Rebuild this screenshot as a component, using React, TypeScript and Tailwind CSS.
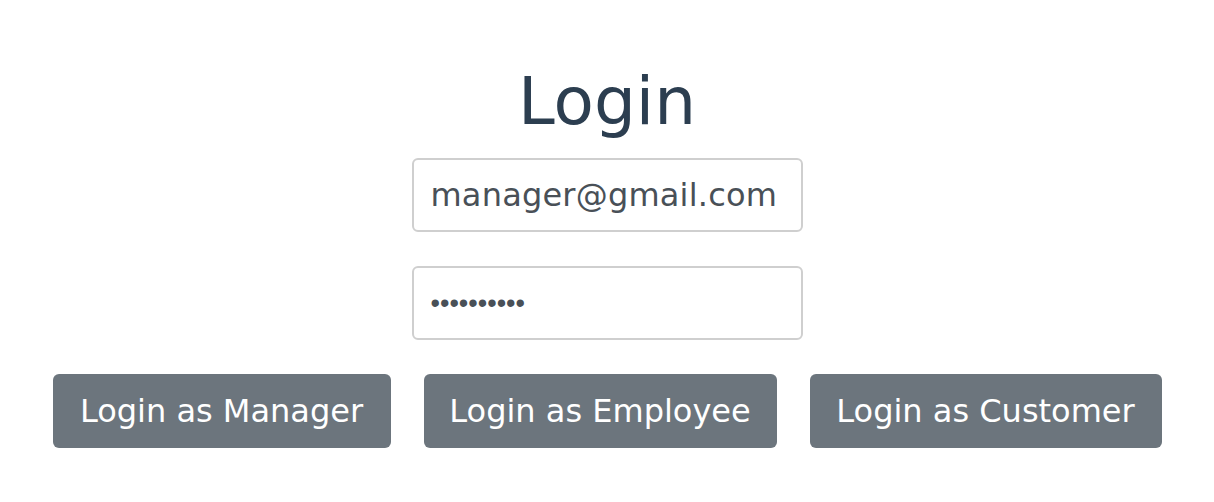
import { useState } from 'react';

const FONT = "font-['DejaVu_Sans',sans-serif]";

export default function App() {
  const [email, setEmail] = useState('manager@gmail.com');
  const [password, setPassword] = useState('manager123');

  const roles = [
    { label: 'Login as Manager', w: 'w-[338px]' },
    { label: 'Login as Employee', w: 'w-[353px]' },
    { label: 'Login as Customer', w: 'w-[352px]' },
  ];

  return (
    <div className={`min-h-screen bg-white flex flex-col items-center pt-[62px] ${FONT}`}>
      <h1 className="text-[66px] leading-[80px] text-[#2c3e50] font-normal">Login</h1>

      <div className="mt-[16px] flex flex-col gap-[34px]">
        <input
          type="email"
          value={email}
          onChange={e => setEmail(e.target.value)}
          className="w-[391px] h-[74px] px-[17px] rounded-[6px] border-2 border-[#cfcfcf] text-[32px] tracking-[0.2px] text-[#495057] outline-none"
        />
        <input
          type="password"
          value={password}
          onChange={e => setPassword(e.target.value)}
          className="w-[391px] h-[74px] px-[17px] rounded-[6px] border-2 border-[#cfcfcf] font-['Liberation_Sans',sans-serif] text-[27px] text-[#495057] outline-none"
        />
      </div>

      <div className="mt-[34px] flex gap-[33px]">
        {roles.map(r => (
          <button
            key={r.label}
            className={`${r.w} h-[74px] rounded-[6px] bg-[#6c757d] text-white text-[32px]`}
          >
            {r.label}
          </button>
        ))}
      </div>
    </div>
  );
}
